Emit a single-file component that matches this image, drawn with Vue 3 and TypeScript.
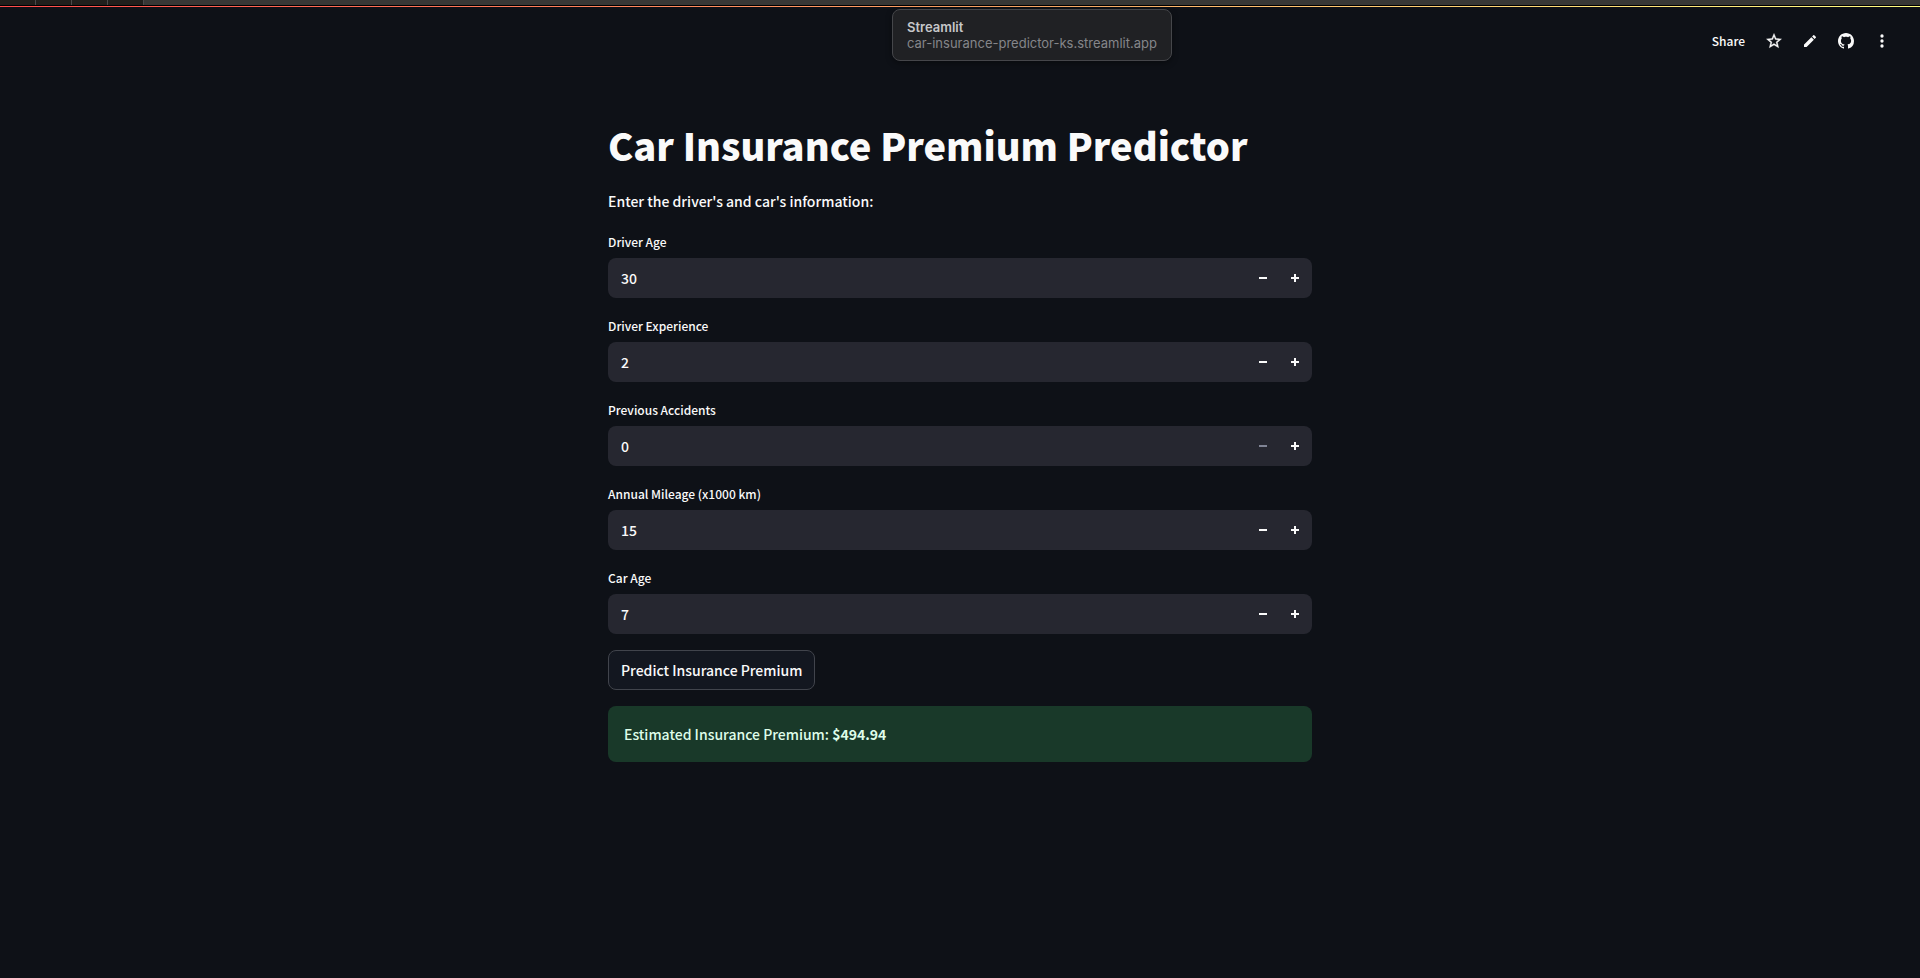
<script setup lang="ts">
import { reactive, ref } from 'vue'

interface Field {
  id: string
  label: string
  value: number
  min: number
}

const fields = reactive<Field[]>([
  { id: 'driver-age', label: 'Driver Age', value: 30, min: 18 },
  { id: 'driver-experience', label: 'Driver Experience', value: 2, min: 0 },
  { id: 'previous-accidents', label: 'Previous Accidents', value: 0, min: 0 },
  { id: 'annual-mileage', label: 'Annual Mileage (x1000 km)', value: 15, min: 0 },
  { id: 'car-age', label: 'Car Age', value: 7, min: 0 },
])

const premium = ref('$494.94')

function step(field: Field, delta: number) {
  field.value = Math.max(field.min, field.value + delta)
}
</script>

<template>
  <div class="app">
    <div class="browser-edge">
      <span v-for="n in 4" :key="n" class="tab"></span>
    </div>
    <div class="decoration"></div>

    <div class="tab-tip" role="tooltip">
      <strong>Streamlit</strong>
      <span>car-insurance-predictor-ks.streamlit.app</span>
    </div>

    <header class="toolbar">
      <button type="button" class="share">Share</button>
      <button type="button" class="icon" aria-label="Favorite">
        <svg viewBox="0 0 24 24" width="18" height="18"><path stroke="currentColor" stroke-width="0.5" d="M22 9.24l-7.19-.62L12 2 9.19 8.63 2 9.24l5.46 4.73L5.82 21 12 17.27 18.18 21l-1.63-7.03L22 9.24zM12 15.4l-3.76 2.27 1-4.28-3.32-2.88 4.38-.38L12 6.1l1.71 4.04 4.38.38-3.32 2.88 1 4.28L12 15.4z" /></svg>
      </button>
      <button type="button" class="icon" aria-label="Edit">
        <svg viewBox="0 0 24 24" width="16" height="16"><path d="M3 17.46v3.04c0 .28.22.5.5.5h3.04c.13 0 .26-.05.35-.15L17.81 9.94l-3.75-3.75L3.15 17.1c-.1.1-.15.22-.15.36zM20.71 7.04a1 1 0 0 0 0-1.41l-2.34-2.34a1 1 0 0 0-1.41 0l-1.83 1.83 3.75 3.75 1.83-1.83z" /></svg>
      </button>
      <button type="button" class="icon" aria-label="View source on GitHub">
        <svg viewBox="0 0 16 16" width="16" height="16"><path d="M8 0C3.58 0 0 3.58 0 8c0 3.54 2.29 6.53 5.47 7.59.4.07.55-.17.55-.38 0-.19-.01-.82-.01-1.49-2.01.37-2.53-.49-2.69-.94-.09-.23-.48-.94-.82-1.13-.28-.15-.68-.52-.01-.53.63-.01 1.08.58 1.23.82.72 1.21 1.87.87 2.33.66.07-.52.28-.87.51-1.07-1.78-.2-3.64-.89-3.64-3.95 0-.87.31-1.59.82-2.15-.08-.2-.36-1.02.08-2.12 0 0 .67-.21 2.2.82.64-.18 1.32-.27 2-.27s1.36.09 2 .27c1.53-1.04 2.2-.82 2.2-.82.44 1.1.16 1.92.08 2.12.51.56.82 1.27.82 2.15 0 3.07-1.87 3.75-3.65 3.95.29.25.54.73.54 1.48 0 1.07-.01 1.93-.01 2.2 0 .21.15.46.55.38A8.01 8.01 0 0 0 16 8c0-4.42-3.58-8-8-8z" /></svg>
      </button>
      <button type="button" class="icon" aria-label="Main menu">
        <svg viewBox="0 0 24 24" width="20" height="20"><circle cx="12" cy="6" r="2" /><circle cx="12" cy="12" r="2" /><circle cx="12" cy="18" r="2" /></svg>
      </button>
    </header>

    <main class="content">
      <h1>Car Insurance Premium Predictor</h1>
      <p class="intro">Enter the driver's and car's information:</p>

      <form class="form" @submit.prevent>
        <div v-for="field in fields" :key="field.id" class="field">
          <label :for="field.id">{{ field.label }}</label>
          <div class="number">
            <input :id="field.id" v-model.number="field.value" type="number" :min="field.min" />
            <button type="button" :disabled="field.value <= field.min" :aria-label="'Decrease ' + field.label" @click="step(field, -1)">
              <svg viewBox="0 0 8 8" width="8" height="8"><path d="M0 3h8v2H0z" /></svg>
            </button>
            <button type="button" :aria-label="'Increase ' + field.label" @click="step(field, 1)">
              <svg viewBox="0 0 8 8" width="8" height="8"><path d="M3 0h2v3h3v2H5v3H3V5H0V3h3z" /></svg>
            </button>
          </div>
        </div>
        <button type="submit" class="predict">Predict Insurance Premium</button>
        <output class="result">Estimated Insurance Premium: <strong>{{ premium }}</strong></output>
      </form>
    </main>
  </div>
</template>

<style>
html,
body {
  background: #0e1117;
}
</style>

<style scoped>
.app {
  min-height: 100vh;
  position: relative;
  box-sizing: border-box;
  background: #0e1117;
  color: #fafafa;
  font-family: "Noto Sans CJK SC", "Noto Sans", sans-serif;
  font-size: 14px;
  font-weight: 500;
  line-height: 24px;
}
button,
input {
  font: inherit;
  color: inherit;
  margin: 0;
}
button {
  padding: 0;
  border: 0;
  background: none;
}
svg {
  display: block;
  fill: currentColor;
}
.browser-edge {
  display: flex;
  height: 5px;
  background: #373735;
}
.tab {
  box-sizing: border-box;
  width: 36px;
  background: #1f1f1c;
  border-right: 1px solid #4a4a4a;
}
.decoration {
  height: 2px;
  border-top: 1px solid #000;
  box-sizing: border-box;
  background: linear-gradient(90deg, #ff4b4b, #fffd80);
}
.tab-tip {
  position: absolute;
  z-index: 1;
  top: 9px;
  left: 892px;
  box-sizing: border-box;
  width: 280px;
  height: 52px;
  padding: 9px 14px;
  display: flex;
  flex-direction: column;
  border: 1px solid #45464a;
  border-radius: 8px;
  background: #202124;
  box-shadow: 0 2px 6px #00000066;
  color: #85868a;
  font-family: Inter, "Liberation Sans", sans-serif;
  font-size: 13px;
  font-weight: 400;
  line-height: 16px;
}
.tab-tip strong {
  color: #c6c7c9;
  font-weight: 600;
}
.toolbar {
  display: flex;
  justify-content: flex-end;
  align-items: center;
  gap: 8px;
  height: 28px;
  padding: 20px 24px 0;
}
.share {
  padding: 0 7px;
  font-size: 12px;
}
.icon {
  width: 28px;
  height: 28px;
  display: grid;
  place-items: center;
}
.content {
  box-sizing: border-box;
  width: 100%;
  max-width: 736px;
  margin: 0 auto;
  padding: 62px 16px 160px;
}
h1 {
  margin: 0;
  padding: 0 0 16px;
  font-size: 38px;
  line-height: 56px;
  font-weight: 900;
}
.intro {
  margin: 0 0 17px;
}
.form {
  display: flex;
  flex-direction: column;
  align-items: flex-start;
  gap: 16px;
}
.field {
  width: 100%;
}
label {
  display: block;
  margin-bottom: 4px;
  font-size: 12px;
  line-height: 24px;
}
.number {
  box-sizing: border-box;
  display: flex;
  height: 40px;
  padding: 0 1px;
  border-radius: 8px;
  background: #262730;
  overflow: hidden;
}
.number input {
  flex: 1;
  min-width: 0;
  padding: 0 12px;
  border: 0;
  outline: 0;
  background: none;
  appearance: textfield;
}
.number input::-webkit-inner-spin-button {
  appearance: none;
}
.number button {
  width: 32px;
  display: grid;
  place-items: center;
}
.number button:disabled {
  color: #808495;
}
.predict {
  height: 40px;
  padding: 0 12px;
  border: 1px solid #41444c;
  border-radius: 8px;
  background: #131720;
}
.result {
  box-sizing: border-box;
  width: 100%;
  padding: 16px;
  border-radius: 8px;
  background: #193929;
  color: #dffde9;
}
.result strong {
  font-weight: 700;
}
</style>
